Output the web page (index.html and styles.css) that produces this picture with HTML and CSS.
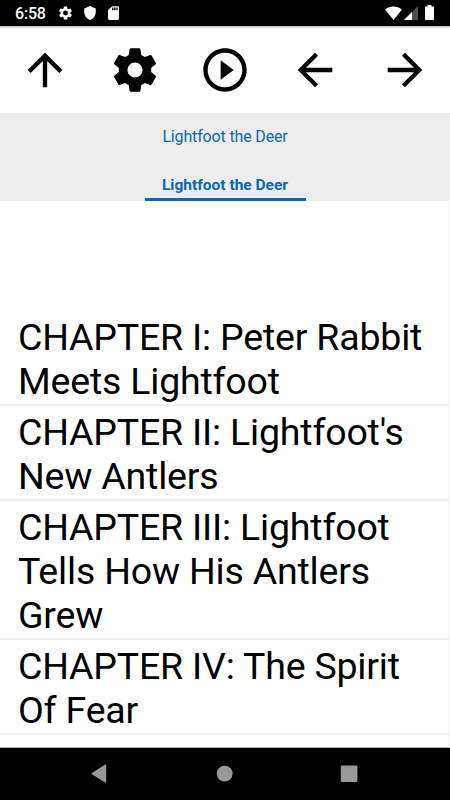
FILE: index.html
```html
<!DOCTYPE html>
<html lang="en">
<head>
<meta charset="utf-8">
<title>Lightfoot the Deer</title>
<link rel="stylesheet" href="styles.css">
</head>
<body>
<div class="screen">
  <header class="status">
    <span class="clock">6:58</span>
    <svg class="st-gear" viewBox="2 2 20 20"><path fill-rule="evenodd" d="M19.43 12.98c.04-.32.07-.64.07-.98s-.03-.66-.07-.98l2.11-1.65c.19-.15.24-.42.12-.64l-2-3.46c-.12-.22-.39-.3-.61-.22l-2.49 1c-.52-.4-1.08-.73-1.69-.98l-.38-2.65C14.46 2.18 14.25 2 14 2h-4c-.25 0-.46.18-.49.42l-.38 2.65c-.61.25-1.17.59-1.69.98l-2.49-1c-.23-.09-.49 0-.61.22l-2 3.46c-.13.22-.07.49.12.64l2.11 1.65c-.04.32-.07.65-.07.98s.03.66.07.98l-2.11 1.65c-.19.15-.24.42-.12.64l2 3.46c.12.22.39.3.61.22l2.49-1c.52.4 1.08.73 1.69.98l.38 2.65c.03.24.24.42.49.42h4c.25 0 .46-.18.49-.42l.38-2.65c.61-.25 1.17-.59 1.69-.98l2.49 1c.23.09.49 0 .61-.22l2-3.46c.12-.22.07-.49-.12-.64l-2.11-1.65zM12 15.8a3.8 3.8 0 1 1 0-7.6 3.8 3.8 0 0 1 0 7.6z"/></svg>
    <svg class="st-shield" viewBox="3 1 18 22"><path d="M12 1 3 5v6c0 5.55 3.84 10.74 9 12 5.16-1.26 9-6.45 9-12V5l-9-4z"/></svg>
    <svg class="st-card" viewBox="4 2 16 20"><path fill-rule="evenodd" d="M18 2h-8L4.02 8 4 20c0 1.1.9 2 2 2h12c1.1 0 2-.9 2-2V4c0-1.1-.9-2-2-2zm-6 6h-2V4h2v4zm3 0h-2V4h2v4zm3 0h-2V4h2v4z"/></svg>
    <span class="spacer"></span>
    <svg class="st-wifi" viewBox="0 0 17 14"><path d="M0 3.4C5 -.6 12 -.6 17 3.4L8.500 14z"/></svg>
    <svg class="st-cell" viewBox="0 0 14 14"><path d="M14 0v14H0z" opacity=".3"/><path d="M8 6v8H0z"/></svg>
    <svg class="st-batt" viewBox="0 0 9 15"><path d="M2.500 0h4v1.500H8q1 0 1 1V14q0 1-1 1H1q-1 0-1-1V2.500q0-1 1-1h1.500z"/></svg>
  </header>
  <nav class="toolbar">
    <svg viewBox="0 0 24 24"><path d="m4 12 1.410 1.410L11 7.830V20h2V7.830l5.580 5.590L20 12l-8-8z"/></svg>
    <svg viewBox="0 0 24 24"><path fill-rule="evenodd" d="M19.430 12.980c.04-.32.07-.64.07-.98s-.03-.66-.07-.98l2.110-1.650c.19-.15.24-.42.12-.64l-2-3.460c-.12-.22-.39-.3-.61-.22l-2.490 1c-.52-.4-1.080-.73-1.690-.98l-.38-2.650C14.460 2.180 14.250 2 14 2h-4c-.25 0-.46.18-.49.42l-.38 2.650c-.61.25-1.170.59-1.690.98l-2.490-1c-.23-.09-.49 0-.61.22l-2 3.460c-.13.22-.07.49.12.64l2.110 1.650c-.04.32-.07.65-.07.98s.03.66.07.98l-2.110 1.650c-.19.15-.24.42-.12.64l2 3.460c.12.22.39.3.61.22l2.490-1c.52.4 1.080.73 1.690.98l.38 2.650c.03.24.24.42.49.42h4c.25 0 .46-.18.49-.42l.38-2.650c.61-.25 1.170-.59 1.690-.98l2.490 1c.23.09.49 0 .61-.22l2-3.460c.12-.22.07-.49-.12-.64l-2.110-1.650zM12 15.500a3.500 3.500 0 1 1 0-7 3.500 3.500 0 0 1 0 7z"/></svg>
    <svg viewBox="0 0 24 24"><path d="m10 16.500 6-4.500-6-4.500v9zM12 2C6.480 2 2 6.480 2 12s4.480 10 10 10 10-4.480 10-10S17.520 2 12 2zm0 18c-4.410 0-8-3.590-8-8s3.590-8 8-8 8 3.590 8 8-3.590 8-8 8z"/></svg>
    <svg viewBox="0 0 24 24"><path d="M20 11H7.830l5.590-5.590L12 4l-8 8 8 8 1.410-1.410L7.830 13H20z"/></svg>
    <svg viewBox="0 0 24 24"><path d="m12 4-1.410 1.410L16.170 11H4v2h12.170l-5.580 5.590L12 20l8-8z"/></svg>
  </nav>
  <section class="titles">
    <div class="title">Lightfoot the Deer</div>
    <div class="tab">Lightfoot the Deer</div>
  </section>
  <main class="content">
    <ul class="chapters">
      <li>CHAPTER I: Peter Rabbit<br>Meets Lightfoot</li>
      <li>CHAPTER II: Lightfoot's<br>New Antlers</li>
      <li>CHAPTER III: Lightfoot<br>Tells How His Antlers<br>Grew</li>
      <li>CHAPTER IV: The Spirit<br>Of Fear</li>
    </ul>
  </main>
  <footer class="navbar">
    <svg viewBox="0 0 450 52"><path d="M106.200 17v17q0 1-1 .5L92 26.300q-1-.6 0-1.200l13.200-8.600q1-.5 1 .5z"/><circle cx="224.700" cy="25.600" r="7.900"/><rect x="340.800" y="17.500" width="16.600" height="16.500" rx="1"/></svg>
  </footer>
</div>
</body>
</html>
```

FILE: styles.css
```css
body {
  margin: 0;
  background: #fff;
  font-family: Roboto, sans-serif;
}

.screen {
  display: flex;
  flex-direction: column;
  width: 450px;
  height: 800px;
  overflow: hidden;
}

.status {
  display: flex;
  align-items: flex-start;
  flex: none;
  box-sizing: border-box;
  height: 26px;
  padding: 6px 16px 0 15px;
  background: #000;
  color: #fff;
  fill: #fff;
}

.clock {
  width: 44px;
  font-size: 16px;
  font-weight: 500;
  line-height: 16px;
  letter-spacing: -0.2px;
}

.st-gear { width: 13px; height: 14px; }
.st-shield { width: 12px; height: 14px; margin-left: 12px; }
.st-card { width: 11px; height: 14px; margin-left: 12px; }
.spacer { flex: 1; }
.st-wifi { width: 17px; height: 14px; }
.st-cell { width: 14px; height: 14px; margin-left: 2px; }
.st-batt { width: 9px; height: 15px; margin: -1px 0 0 7px; }

.toolbar {
  display: grid;
  grid-template-columns: repeat(5, 90px);
  place-items: center;
  flex: none;
  height: 87px;
  background: linear-gradient(#b8b8b8, #f0f0f0 2px, #fff 4px);
}

.toolbar svg {
  width: 52px;
  height: 52px;
}

.titles {
  display: flex;
  flex-direction: column;
  align-items: center;
  flex: none;
  height: 88px;
  background: #ededed;
  color: #0a67ba;
  line-height: 18px;
}

.title {
  padding-top: 15px;
  font-size: 16px;
  letter-spacing: -0.15px;
}

.tab {
  box-sizing: border-box;
  width: 161px;
  height: 55px;
  padding-top: 30px;
  border-bottom: 3px solid #0a67ba;
  text-align: center;
  font-size: 15.500px;
  font-weight: 700;
}

.content {
  flex: 1;
  min-height: 0;
  overflow: hidden;
  box-sizing: border-box;
  padding-top: 110px;
  border-right: 1px solid #ededed;
  border-bottom: 1px solid #aaa;
}

.chapters {
  margin: 0;
  padding: 0;
  list-style: none;
  color: #000;
  font-size: 37.500px;
  line-height: 44px;
  letter-spacing: -0.2px;
}

.chapters li {
  padding: 5px 0 0 18px;
  border-bottom: 2px solid #f0f0f0;
  white-space: nowrap;
}

.chapters li:first-child {
  margin-top: -1px;
  padding-bottom: 1px;
}

.chapters li + li {
  padding: 4px 0 1px 18px;
}

.navbar {
  flex: none;
  height: 52px;
  background: #000;
  fill: #999;
}

.navbar svg {
  display: block;
  width: 450px;
  height: 52px;
}
```
